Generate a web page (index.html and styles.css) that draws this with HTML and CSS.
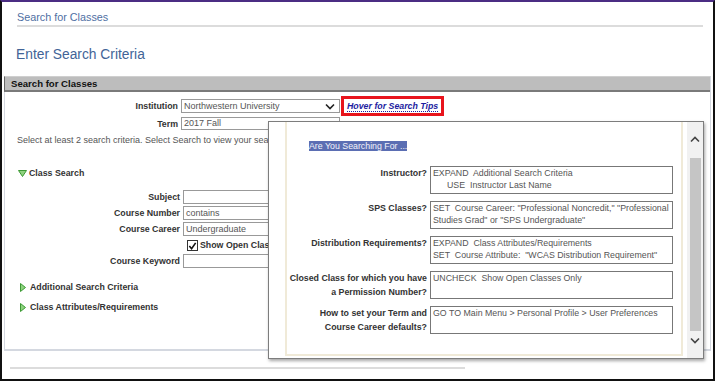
FILE: index.html
```html
<!DOCTYPE html>
<html lang="en">
<head>
  <meta charset="UTF-8">
  <title>Search for Classes</title>
  <link rel="stylesheet" href="styles.css">
</head>
<body>

  <div class="frame">
    <div class="crumb">Search for Classes</div>
    <h1 class="title">Enter Search Criteria</h1>

    <div class="section">
      <div class="section-head">Search for Classes</div>

      <div class="top-row">
        <span class="label">Institution</span>
        <div class="field select">Northwestern University
          <svg class="chev" width="10" height="7" viewBox="0 0 10 7"><path d="M1 1.5 L5 5.5 L9 1.5" fill="none" stroke="#222" stroke-width="1.6"/></svg>
        </div>
        <span class="tips"><a href="#" class="tips-link">Hover for Search Tips</a></span>
      </div>
      <div class="top-row term-row">
        <span class="label">Term</span>
        <div class="field term">2017 Fall</div>
      </div>

      <p class="hint">Select at least 2 search criteria. Select Search to view your search results.</p>

      <div class="group open">
        <svg width="9" height="7" viewBox="0 0 9 7"><path d="M0.5 0.5 H8.5 L4.5 6.5 Z" fill="#8fd27f" stroke="#3d9a35"/></svg>
        Class Search
      </div>

      <div class="fields">
        <span class="label">Subject</span><div class="field"></div>
        <span class="label">Course Number</span><div class="field">contains</div>
        <span class="label">Course Career</span><div class="field">Undergraduate</div>
        <span></span>
        <div class="check-line">
          <span class="checkbox"><svg width="10" height="10" viewBox="0 0 10 10"><path d="M1.5 5 L4 8 L8.5 1.5" fill="none" stroke="#111" stroke-width="1.8"/></svg></span>
          Show Open Classes Only
        </div>
        <span class="label">Course Keyword</span><div class="field"></div>
      </div>

      <div class="group closed first">
        <svg width="6" height="9" viewBox="0 0 6 9"><path d="M0.5 0.5 L5.5 4.5 L0.5 8.5 Z" fill="#8fd27f" stroke="#3d9a35"/></svg>
        Additional Search Criteria
      </div>
      <div class="group closed">
        <svg width="6" height="9" viewBox="0 0 6 9"><path d="M0.5 0.5 L5.5 4.5 L0.5 8.5 Z" fill="#8fd27f" stroke="#3d9a35"/></svg>
        Class Attributes/Requirements
      </div>
    </div>

    <div class="foot-line"></div>

    <!-- tooltip opened by hovering the tips link -->
    <div class="tip-popup">
      <div class="tip-panel">
        <div class="tip-title"><span>Are You Searching For ...</span></div>

        <div class="tip-row">
          <span class="tip-label">Instructor?</span>
          <div class="tip-box">EXPAND  Additional Search Criteria
<span class="indent">USE  Instructor Last Name</span></div>
        </div>
        <div class="tip-row">
          <span class="tip-label">SPS Classes?</span>
          <div class="tip-box">SET  Course Career: "Professional Noncredit," "Professional
Studies Grad" or "SPS Undergraduate"</div>
        </div>
        <div class="tip-row">
          <span class="tip-label">Distribution Requirements?</span>
          <div class="tip-box">EXPAND  Class Attributes/Requirements
SET  Course Attribute:  "WCAS Distribution Requirement"</div>
        </div>
        <div class="tip-row">
          <span class="tip-label">Closed Class for which you have<br>a Permission Number?</span>
          <div class="tip-box">UNCHECK  Show Open Classes Only</div>
        </div>
        <div class="tip-row">
          <span class="tip-label">How to set your Term and<br>Course Career defaults?</span>
          <div class="tip-box">GO TO Main Menu &gt; Personal Profile &gt; User Preferences</div>
        </div>
      </div>

      <div class="scrollbar">
        <svg class="arrow" width="10" height="7" viewBox="0 0 10 7"><path d="M1 5.5 L5 1.5 L9 5.5" fill="none" stroke="#444" stroke-width="1.6"/></svg>
        <div class="thumb"></div>
        <svg class="arrow" width="10" height="7" viewBox="0 0 10 7"><path d="M1 1.5 L5 5.5 L9 1.5" fill="none" stroke="#444" stroke-width="1.6"/></svg>
      </div>
    </div>
  </div>

</body>
</html>
```

FILE: styles.css
```css
* {
  box-sizing: border-box;
}

body {
  margin: 0;
  font-family: 'Liberation Sans', Arial, sans-serif;
  font-size: 9px;
  color: #333;
  background: #fff;
}

.frame {
  position: relative;
  width: 715px;
  height: 381px;
  border: 2px solid #111;
  border-top-color: #4b2d83;
  overflow: hidden;
}

.crumb {
  margin: 0 10px 0 15px;
  padding-top: 8px;
  height: 25px;
  border-bottom: 2px solid #dcdcdc;
  font-size: 10.8px;
  line-height: 15px;
  color: #4f6fa3;
}

.title {
  margin: 18px 0 0 14px;
  font-size: 13.8px;
  font-weight: normal;
  line-height: 20px;
  color: #426497;
}

.section {
  margin: 11px 2px 0 2px;
  height: 275px;
  border: 1px solid #d4d8e0;
  border-top: none;
  border-bottom-width: 2px;
}

.section-head {
  height: 16px;
  margin-left: -1px;
  padding-left: 6px;
  background: #bdbdbd;
  border-top: 1px solid #cfcfcf;
  border-left: 1px solid #666;
  border-bottom: 2px solid #7a7a7a;
  font-size: 9.6px;
  font-weight: bold;
  line-height: 13px;
  color: #111;
}

.top-row {
  display: flex;
  align-items: center;
  margin-top: 7px;
  height: 14px;
}

.term-row {
  margin-top: 4px;
  height: 13px;
}

.label {
  font-size: 8.8px;
  font-weight: bold;
  color: #333;
  text-align: right;
}

.top-row .label {
  width: 173px;
  margin-right: 3px;
}

.field {
  height: 14px;
  border: 1px solid #999;
  padding: 0 2px;
  line-height: 12px;
  color: #555;
  background: #fff;
}

.select {
  position: relative;
  width: 159px;
}

.chev {
  position: absolute;
  right: 4px;
  top: 3px;
}

.term {
  width: 159px;
  height: 13px;
  line-height: 11px;
}

.tips {
  margin: -3px 0 -3px 1px;
  padding: 2px 3px 0 3px;
  height: 20px;
  border: 3px solid #e8141c;
}

.tips-link {
  font-size: 8.8px;
  font-weight: bold;
  font-style: italic;
  color: #1c1ca0;
  text-decoration: none;
  border-bottom: 1px dotted #1c1ca0;
}

.hint {
  margin: 4px 0 0 12px;
  line-height: 13px;
  color: #555;
}

.group {
  display: flex;
  align-items: center;
  gap: 2px;
  font-size: 8.8px;
  font-weight: bold;
  line-height: 13px;
  color: #333;
}

.group.open {
  margin: 20px 0 0 13px;
}

.group.closed {
  margin: 7px 0 0 15px;
  gap: 4px;
}

.group.closed.first {
  margin-top: 13px;
}

.fields {
  display: grid;
  grid-template-columns: 175px 110px;
  grid-auto-rows: 14px;
  row-gap: 2px;
  column-gap: 3px;
  align-items: center;
  margin: 10px 0 4px 0;
}

.check-line {
  display: flex;
  align-items: center;
  gap: 2px;
  padding-left: 4px;
  font-size: 8.8px;
  font-weight: bold;
  white-space: nowrap;
}

.checkbox {
  display: inline-flex;
  width: 11px;
  height: 11px;
  border: 1px solid #333;
  background: #fff;
}

.foot-line {
  margin: 16px 0 0 8px;
  width: 455px;
  border-top: 2px solid #dcdcdc;
}

.tip-popup {
  position: absolute;
  left: 266px;
  top: 119px;
  width: 436px;
  height: 238px;
  display: flex;
  padding-left: 16px;
  background: #fff;
  border: 1px solid #7d7d7d;
  box-shadow: 1px 2px 3px rgba(0, 0, 0, 0.35);
}

.tip-panel {
  flex: 1;
  margin-bottom: 2px;
  border: 2px solid #f0ead8;
  border-top: none;
}

.tip-title {
  margin: 19px 0 0 22px;
  font-size: 8.8px;
  line-height: 11px;
}

.tip-title span {
  background: #5b6eb3;
  color: #f2f3fa;
}

.tip-row {
  display: flex;
  align-items: flex-start;
  margin-top: 7px;
}

.tip-title + .tip-row {
  margin-top: 14px;
}

.tip-label {
  width: 140px;
  margin-right: 3px;
  font-size: 8.8px;
  font-weight: bold;
  line-height: 14px;
  text-align: right;
  color: #333;
}

.tip-box {
  width: 243px;
  height: 28px;
  padding: 1px 1px 1px 2px;
  border: 1px solid #777;
  font-size: 8.8px;
  line-height: 11.5px;
  color: #555;
  white-space: pre;
  overflow: hidden;
}

.indent {
  padding-left: 14px;
}

.scrollbar {
  width: 16px;
  margin-left: 4px;
  display: flex;
  flex-direction: column;
  align-items: center;
  background: #f1f1f1;
  padding-top: 14px;
}

.scrollbar .arrow {
  flex: none;
}

.thumb {
  width: 11px;
  height: 173px;
  margin: 15px 0 6px 0;
  background: #c5c5c5;
}
```
